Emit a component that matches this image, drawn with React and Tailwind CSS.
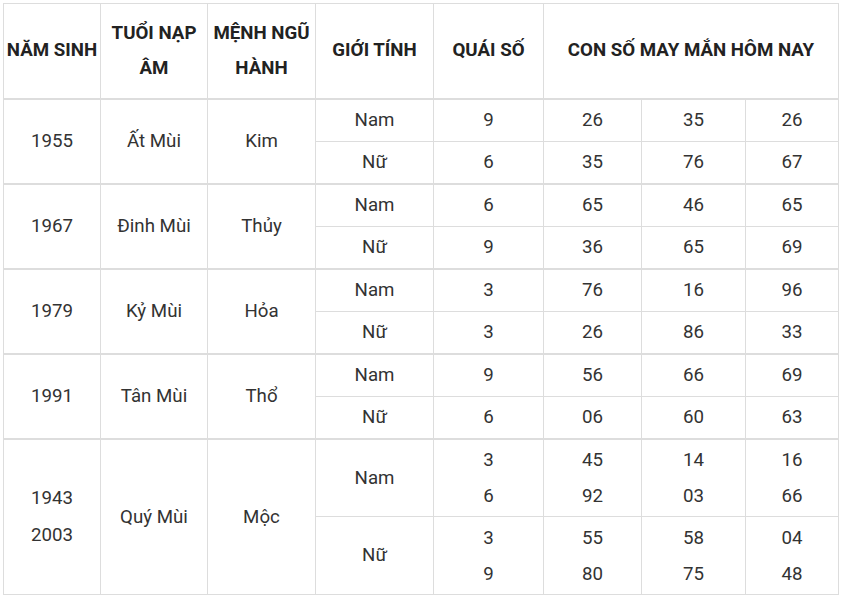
import React from 'react';

const groups = [
  { year: ['1955'], tuoi: 'Ất Mùi', menh: 'Kim', rows: [
    { g: 'Nam', q: ['9'], n: [['26'], ['35'], ['26']] },
    { g: 'Nữ', q: ['6'], n: [['35'], ['76'], ['67']] },
  ] },
  { year: ['1967'], tuoi: 'Đinh Mùi', menh: 'Thủy', rows: [
    { g: 'Nam', q: ['6'], n: [['65'], ['46'], ['65']] },
    { g: 'Nữ', q: ['9'], n: [['36'], ['65'], ['69']] },
  ] },
  { year: ['1979'], tuoi: 'Kỷ Mùi', menh: 'Hỏa', rows: [
    { g: 'Nam', q: ['3'], n: [['76'], ['16'], ['96']] },
    { g: 'Nữ', q: ['3'], n: [['26'], ['86'], ['33']] },
  ] },
  { year: ['1991'], tuoi: 'Tân Mùi', menh: 'Thổ', rows: [
    { g: 'Nam', q: ['9'], n: [['56'], ['66'], ['69']] },
    { g: 'Nữ', q: ['6'], n: [['06'], ['60'], ['63']] },
  ] },
  { year: ['1943', '2003'], tuoi: 'Quý Mùi', menh: 'Mộc', tall: true, rows: [
    { g: 'Nam', q: ['3', '6'], n: [['45', '92'], ['14', '03'], ['16', '66']] },
    { g: 'Nữ', q: ['3', '9'], n: [['55', '80'], ['58', '75'], ['04', '48']] },
  ] },
];

const td = 'border border-[#dddddd] text-center align-middle p-0';

const Lines = ({ items }) => (
  <>
    {items.map((t, i) => (
      <div key={i} className="leading-[36px]">{t}</div>
    ))}
  </>
);

export default function App() {
  return (
    <div className="w-[844px] h-[603px] bg-white pt-[3px] pl-[3px]" style={{ fontFamily: 'Roboto, "Liberation Sans", sans-serif' }}>
      <table className="table-fixed border-collapse w-[835px] text-[18.7px] text-[#333333]">
        <colgroup>
          <col className="w-[97px]" />
          <col className="w-[107px]" />
          <col className="w-[108px]" />
          <col className="w-[118px]" />
          <col className="w-[110px]" />
          <col className="w-[98px]" />
          <col className="w-[104px]" />
          <col className="w-[93px]" />
        </colgroup>
        <thead>
          <tr className="h-[95px] font-bold text-[#222222] leading-[35px]">
            <th className={`${td} border-b-2`}>NĂM SINH</th>
            <th className={`${td} border-b-2 px-2`}>TUỔI NẠP ÂM</th>
            <th className={`${td} border-b-2`}>MỆNH NGŨ HÀNH</th>
            <th className={`${td} border-b-2`}>GIỚI TÍNH</th>
            <th className={`${td} border-b-2`}>QUÁI SỐ</th>
            <th className={`${td} border-b-2`} colSpan={3}>CON SỐ MAY MẮN HÔM NAY</th>
          </tr>
        </thead>
        <tbody>
          {groups.map((gr, gi) =>
            gr.rows.map((r, ri) => (
              <tr
                key={`${gi}-${ri}`}
                className={gr.tall ? 'h-[78px]' : ri === 0 ? 'h-[43px]' : 'h-[42px]'}
              >
                {ri === 0 && (
                  <>
                    <td rowSpan={2} className={`${td} border-t-2`}>
                      {gr.year.map((y) => (
                        <div key={y} className="leading-[37px]">{y}</div>
                      ))}
                    </td>
                    <td rowSpan={2} className={`${td} border-t-2`}>{gr.tuoi}</td>
                    <td rowSpan={2} className={`${td} border-t-2`}>{gr.menh}</td>
                  </>
                )}
                <td className={`${td} ${ri === 0 ? 'border-t-2' : 'border-t-[#e6e6e6]'}`}>{r.g}</td>
                <td className={`${td} ${ri === 0 ? 'border-t-2' : 'border-t-[#e6e6e6]'}`}>
                  <Lines items={r.q} />
                </td>
                {r.n.map((col, ci) => (
                  <td key={ci} className={`${td} ${ri === 0 ? 'border-t-2' : 'border-t-[#e6e6e6]'}`}>
                    <Lines items={col} />
                  </td>
                ))}
              </tr>
            ))
          )}
        </tbody>
      </table>
    </div>
  );
}
